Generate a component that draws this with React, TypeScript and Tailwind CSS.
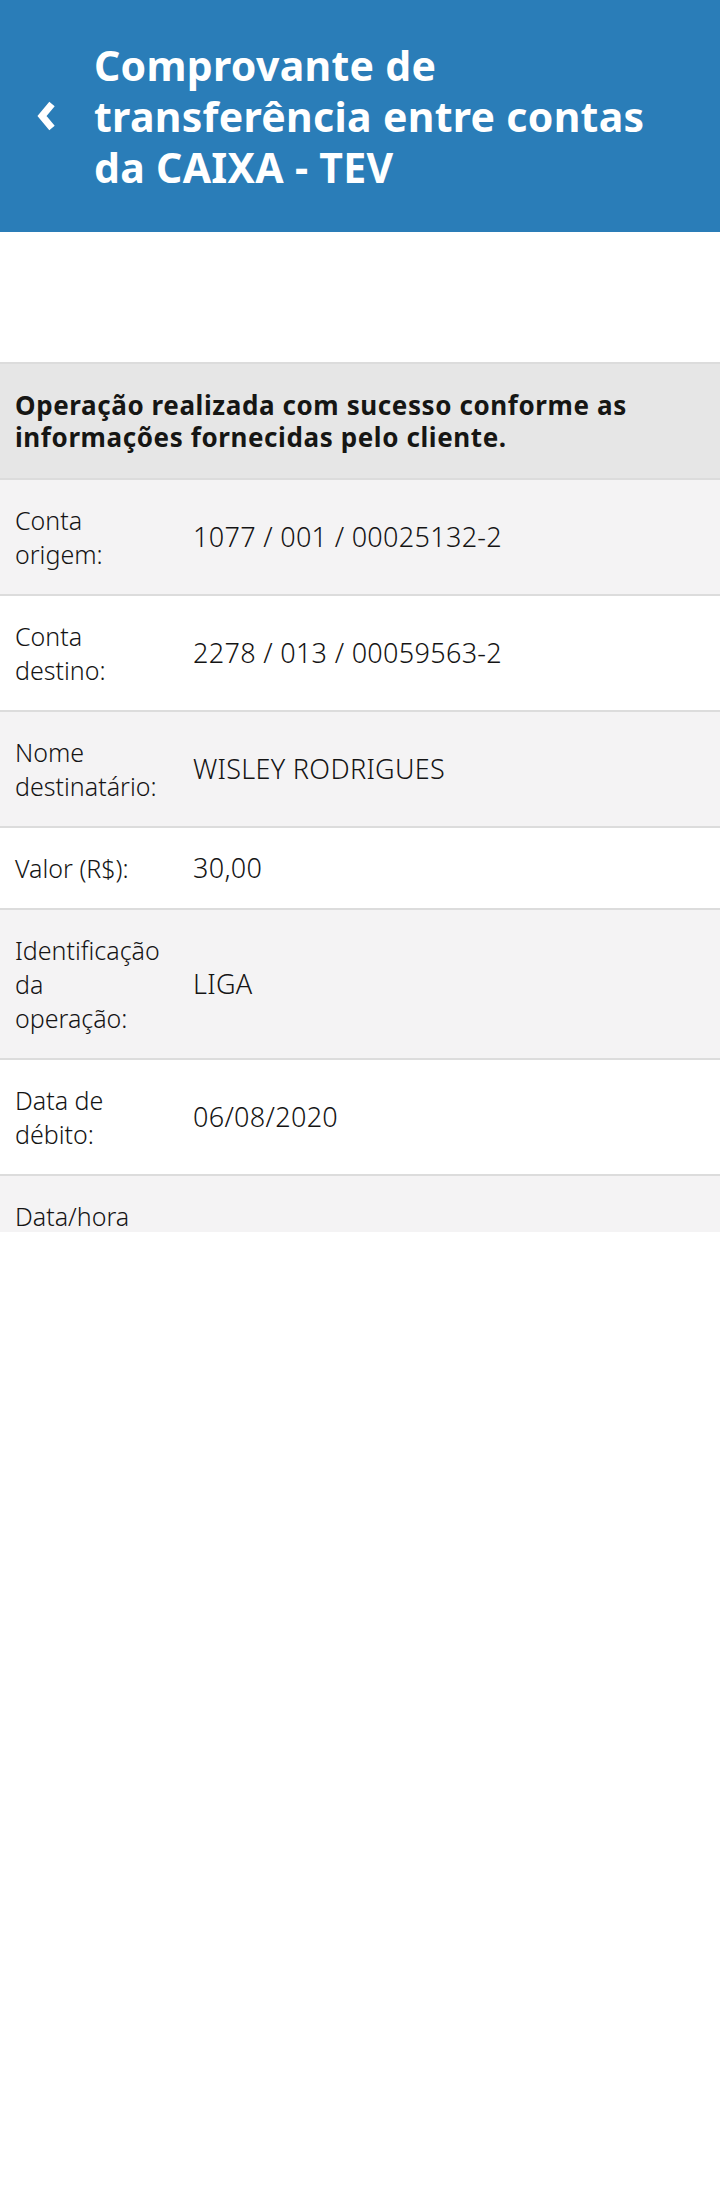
import React from "react";

const rows: { label: string[]; value: string; bg: string }[] = [
  { label: ["Conta", "origem:"], value: "1077 / 001 / 00025132-2", bg: "bg-[#f4f3f4]" },
  { label: ["Conta", "destino:"], value: "2278 / 013 / 00059563-2", bg: "bg-white" },
  { label: ["Nome", "destinatário:"], value: "WISLEY RODRIGUES", bg: "bg-[#f4f3f4]" },
  { label: ["Valor (R$):"], value: "30,00", bg: "bg-white" },
  { label: ["Identificação", "da", "operação:"], value: "LIGA", bg: "bg-[#f4f3f4]" },
  { label: ["Data de", "débito:"], value: "06/08/2020", bg: "bg-white" },
  { label: ["Data/hora", "da", "operação:"], value: "06/08/2020 - 10:12:45", bg: "bg-[#f4f3f4]" },
];

export default function App() {
  return (
    <div className="w-[720px] min-h-[2204px] bg-white" style={{ fontFamily: "'Noto Sans', 'Open Sans', sans-serif" }}>
      <header className="h-[232px] bg-[#2a7db8] flex items-center">
        <div className="w-[94px] flex justify-center items-center">
          <svg width="24" height="30" viewBox="0 0 24 30" className="ml-[-1px]">
            <path d="M17 3 L7 15 L17 27" fill="none" stroke="white" strokeWidth="7" strokeLinecap="butt" strokeLinejoin="miter" />
          </svg>
        </div>
        <h1 className="text-white font-bold text-[41px] leading-[51px] tracking-[0.3px] pr-4">
          Comprovante de<br />transferência entre contas<br />da CAIXA - TEV
        </h1>
      </header>
      <div className="h-[1000px] overflow-hidden">
        <div className="h-[130px]" />
        <div className="border-t-2 border-[#dcdcdc] bg-[#e6e6e6] pl-[15px] pr-2 pt-[25px] pb-[25px]">
          <p className="text-[#161614] font-bold text-[26px] leading-[32px] tracking-[0.6px] whitespace-nowrap">
            Operação realizada com sucesso conforme as
            <br />
            informações fornecidas pelo cliente.
          </p>
        </div>
        {rows.map((r, i) => (
          <div
            key={i}
            className={`${r.bg} border-t-2 border-[#dcdcdc] flex items-center pl-[15px] pr-4 py-[23px]`}
          >
            <div className="w-[178px] shrink-0 text-[#141414] font-light text-[25px] leading-[34px]">
              {r.label.map((l, j) => (
                <div key={j} className="whitespace-nowrap">
                  {l}
                </div>
              ))}
            </div>
            <div className="text-[#141414] font-light text-[27px] leading-[34px] tracking-[0.3px]">{r.value}</div>
          </div>
        ))}
      </div>
    </div>
  );
}
